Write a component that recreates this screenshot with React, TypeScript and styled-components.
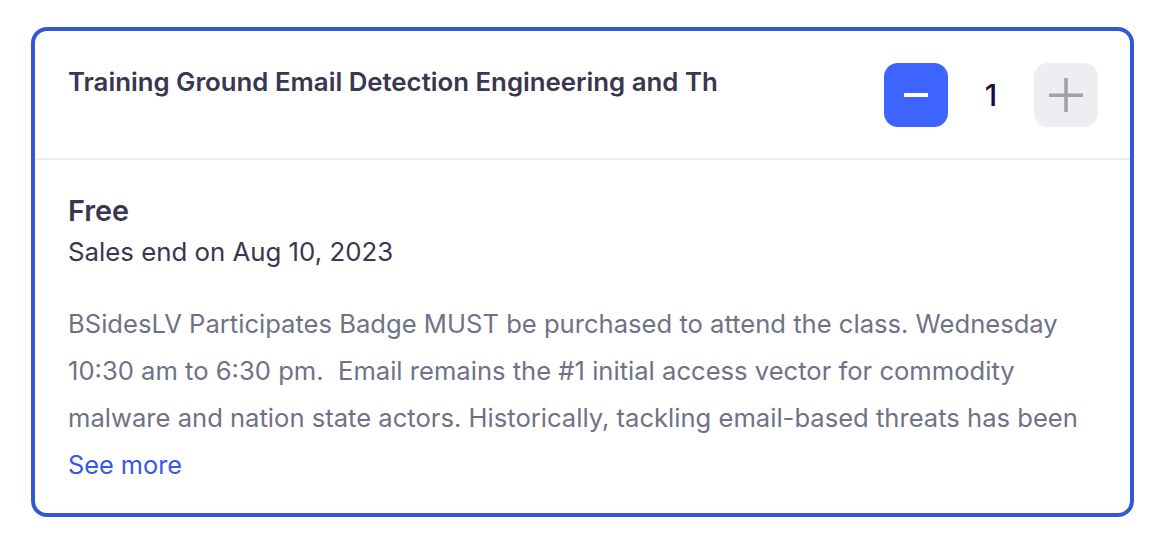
import React, { FC, useState } from 'react';
import styled, { createGlobalStyle } from 'styled-components';

const GlobalStyle = createGlobalStyle`
  html, body {
    margin: 0;
    padding: 0;
    background: #ffffff;
  }

  body {
    font-family: Inter, 'Noto Sans', 'Liberation Sans', sans-serif;
    -webkit-font-smoothing: antialiased;
  }
`;

const Page = styled.div`
  padding: 27px 36px 22px 31px;
`;

const Card = styled.section`
  width: 1103px;
  box-sizing: border-box;
  border: 4px solid #3358d4;
  border-radius: 16px;
  background: #ffffff;
  overflow: hidden;
`;

const Header = styled.header`
  display: flex;
  align-items: flex-start;
  justify-content: space-between;
  padding: 32px 32px 31px 33px;
  border-bottom: 2px solid #eeedf2;
`;

const Title = styled.h3`
  margin: 3px 0 0;
  width: 650px;
  overflow: hidden;
  white-space: nowrap;
  font-size: 25.8px;
  line-height: 32px;
  font-weight: 600;
  color: #39364f;
`;

const Stepper = styled.div`
  display: flex;
  align-items: center;
`;

interface IStepButton {
  active: boolean;
}

const StepButton = styled.button<IStepButton>`
  display: flex;
  align-items: center;
  justify-content: center;
  width: 64px;
  height: 64px;
  padding: 0;
  border: none;
  border-radius: 14px;
  cursor: pointer;
  background-color: ${({ active }) => (active ? '#3d64ff' : '#eeedf2')};
  color: ${({ active }) => (active ? '#ffffff' : '#a09fab')};
`;

const Count = styled.span`
  width: 86px;
  text-align: center;
  font-size: 30px;
  line-height: 36px;
  font-weight: 500;
  color: #1e0a3c;
`;

const Body = styled.div`
  padding: 34px 32px 32px 33px;
`;

const Price = styled.div`
  font-size: 28.8px;
  line-height: 34px;
  font-weight: 600;
  color: #39364f;
`;

const SalesEnd = styled.div`
  margin-top: 8px;
  font-size: 25.8px;
  line-height: 32px;
  font-weight: 400;
  color: #39364f;
`;

const Description = styled.p`
  margin: 32px 0 0;
  max-height: 141px;
  overflow: hidden;
  font-size: 25.6px;
  line-height: 47px;
  font-weight: 400;
  color: #6f7287;
`;

const SeeMore = styled.button`
  display: block;
  margin-top: 8px;
  padding: 0;
  border: none;
  background: transparent;
  cursor: pointer;
  font-family: inherit;
  font-size: 25.3px;
  line-height: 32px;
  font-weight: 400;
  color: #3659e3;
`;

const MinusIcon: FC = () => (
  <svg width='26' height='26' viewBox='0 0 26 26' fill='none'>
    <rect x='1' y='11' width='24' height='4' rx='0.5' fill='currentColor' />
  </svg>
);

const PlusIcon: FC = () => (
  <svg width='34' height='34' viewBox='0 0 34 34' fill='none'>
    <rect x='0' y='15.5' width='34' height='3.5' fill='currentColor' />
    <rect x='15.25' y='0' width='3.5' height='34' fill='currentColor' />
  </svg>
);

const description =
  'BSidesLV Participates Badge MUST be purchased to attend the class. Wednesday 10:30 am to 6:30 pm.\u00a0 Email remains the #1 initial access vector for commodity malware and nation state actors. Historically, tackling email-based threats has been a challenge for defenders, who have had to rely on vendors and limited tooling.';

const App: FC = () => {
  const [count, setCount] = useState(1);

  return (
    <Page>
      <GlobalStyle />
      <Card>
        <Header>
          <Title>Training Ground Email Detection Engineering and Threat Hunting</Title>
          <Stepper>
            <StepButton active type='button' aria-label='Decrease' onClick={() => setCount(Math.max(0, count - 1))}>
              <MinusIcon />
            </StepButton>
            <Count>{count}</Count>
            <StepButton active={false} type='button' aria-label='Increase' onClick={() => setCount(count + 1)}>
              <PlusIcon />
            </StepButton>
          </Stepper>
        </Header>
        <Body>
          <Price>Free</Price>
          <SalesEnd>Sales end on Aug 10, 2023</SalesEnd>
          <Description>{description}</Description>
          <SeeMore type='button'>See more</SeeMore>
        </Body>
      </Card>
    </Page>
  );
};

export default App;
